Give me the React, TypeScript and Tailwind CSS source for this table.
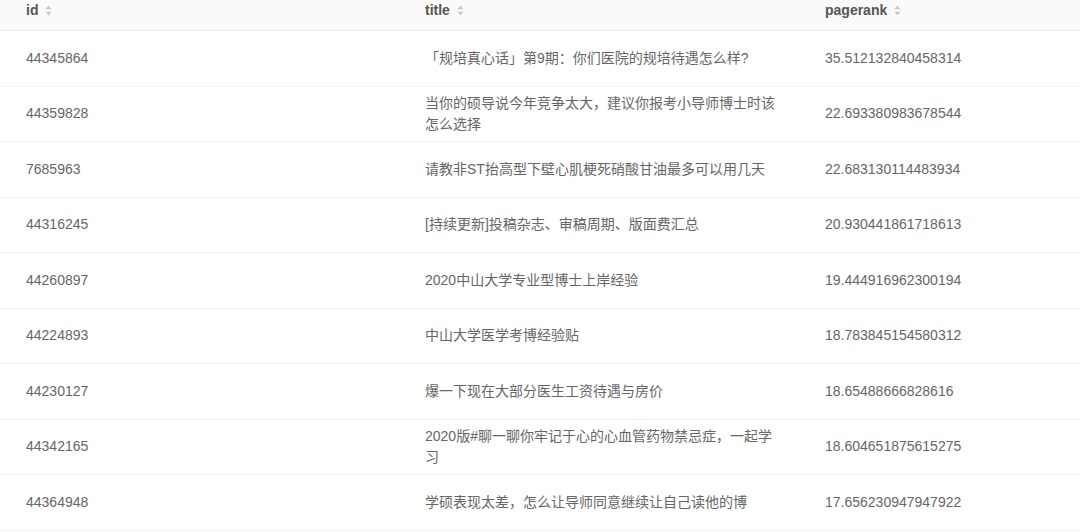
const rows = [
  { id: "44345864", title: "「规培真心话」第9期：你们医院的规培待遇怎么样?", pagerank: "35.512132840458314" },
  { id: "44359828", title: "当你的硕导说今年竞争太大，建议你报考小导师博士时该怎么选择", pagerank: "22.693380983678544" },
  { id: "7685963", title: "请教非ST抬高型下壁心肌梗死硝酸甘油最多可以用几天", pagerank: "22.683130114483934" },
  { id: "44316245", title: "[持续更新]投稿杂志、审稿周期、版面费汇总", pagerank: "20.930441861718613" },
  { id: "44260897", title: "2020中山大学专业型博士上岸经验", pagerank: "19.444916962300194" },
  { id: "44224893", title: "中山大学医学考博经验贴", pagerank: "18.783845154580312" },
  { id: "44230127", title: "爆一下现在大部分医生工资待遇与房价", pagerank: "18.65488666828616" },
  { id: "44342165", title: "2020版#聊一聊你牢记于心的心血管药物禁忌症，一起学习", pagerank: "18.604651875615275" },
  { id: "44364948", title: "学硕表现太差，怎么让导师同意继续让自己读他的博", pagerank: "17.656230947947922" },
];

function SortIcon() {
  return (
    <svg width="7" height="11" viewBox="0 0 7 11" className="ml-[7px] text-[#c8c8c8]">
      <path d="M3.5 0.5 L6.5 4.2 H0.5 Z" fill="currentColor" />
      <path d="M3.5 10.5 L6.5 6.8 H0.5 Z" fill="currentColor" />
    </svg>
  );
}

const cols = "grid grid-cols-[399px_400px_1fr]";

export default function App() {
  return (
    <div
      className="w-[1080px] h-[532px] overflow-hidden bg-white text-[14px]"
      style={{ fontFamily: '"Liberation Sans", "Noto Sans CJK SC", sans-serif' }}
    >
      {/* header */}
      <div className={`${cols} h-[31px] bg-[#fafafa] border-b border-[#ebebeb] font-bold text-[#555]`}>
        {["id", "title", "pagerank"].map((h) => (
          <div key={h} className="flex items-center h-[20px] pl-[26px] leading-[20px]">
            {h}
            <SortIcon />
          </div>
        ))}
      </div>

      {/* body */}
      {rows.map((r) => (
        <div
          key={r.id}
          className={`${cols} h-[55.5px] border-b border-[#efefef] text-[#666] leading-[21px]`}
        >
          <div className="flex items-center pl-[26px]">{r.id}</div>
          <div className="flex items-center pl-[26px]">
            <div className="w-[354px]">{r.title}</div>
          </div>
          <div className="flex items-center pl-[26px]">{r.pagerank}</div>
        </div>
      ))}
    </div>
  );
}
